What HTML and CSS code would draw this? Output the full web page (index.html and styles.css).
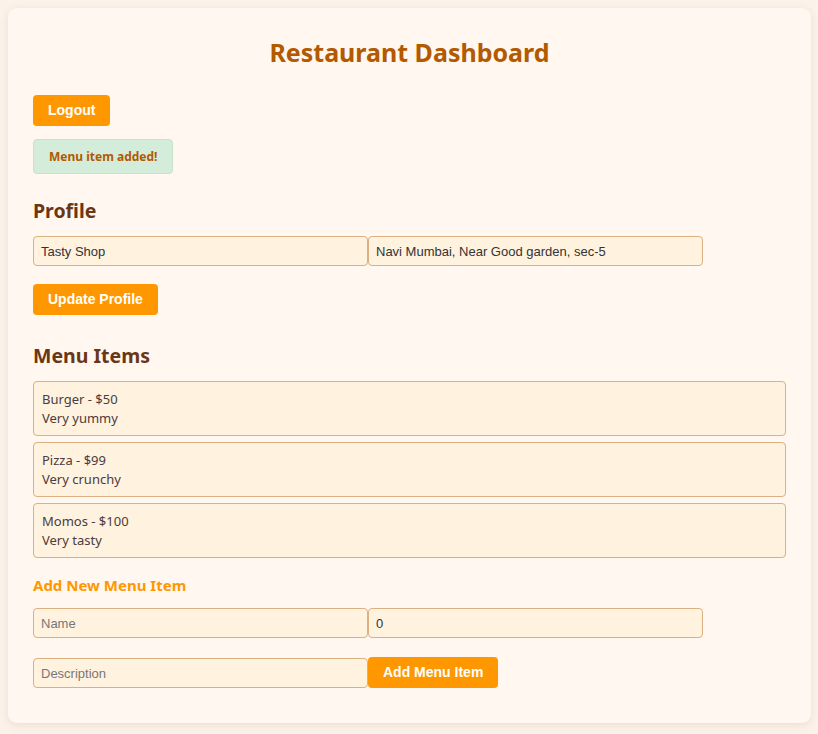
FILE: index.html
```html
<!DOCTYPE html>
<html lang="en">
<head>
<meta charset="utf-8">
<title>Restaurant Dashboard</title>
<link rel="stylesheet" href="styles.css">
</head>
<body>
<div class="card">
  <h1 class="title">Restaurant Dashboard</h1>
  <button class="btn logout">Logout</button>
  <div class="alert">Menu item added!</div>

  <h3 class="section">Profile</h3>
  <div class="row profile-row">
    <input class="field" type="text" value="Tasty Shop">
    <input class="field" type="text" value="Navi Mumbai, Near Good garden, sec-5">
  </div>
  <button class="btn update">Update Profile</button>

  <h3 class="section menu-heading">Menu Items</h3>
  <div class="menu-list">
    <div class="menu-item">Burger - $50<br>Very yummy</div>
    <div class="menu-item">Pizza - $99<br>Very crunchy</div>
    <div class="menu-item">Momos - $100<br>Very tasty</div>
  </div>

  <h4 class="add-heading">Add New Menu Item</h4>
  <div class="row add-row1">
    <input class="field" type="text" placeholder="Name">
    <input class="field" type="number" value="0">
  </div>
  <div class="row add-row2">
    <input class="field" type="text" placeholder="Description">
    <button class="btn add">Add Menu Item</button>
  </div>
</div>
</body>
</html>
```

FILE: styles.css
```css
html, body {
  margin: 0;
  padding: 0;
}
body {
  background: #fbf2ea;
  padding: 8px 7px 12px 8px;
  font-family: "Noto Sans", "Open Sans", sans-serif;
}
.card {
  background: #fff7f0;
  border-radius: 9px;
  box-shadow: 0 2px 8px rgba(120, 70, 20, 0.10);
  padding: 27px 25px 35px;
}
.title {
  margin: 0 0 26px;
  text-align: center;
  font-size: 25px;
  line-height: 34px;
  font-weight: 700;
  color: #b35900;
}
.btn {
  display: block;
  background: #ff9800;
  color: #fff;
  border: none;
  border-radius: 4px;
  font-family: "Liberation Sans", Arial, sans-serif;
  font-weight: 700;
  font-size: 14px;
  line-height: 17px;
  padding: 7px 15px;
  margin: 0;
  cursor: pointer;
}
.alert {
  display: inline-block;
  margin-top: 13px;
  background: #d4edda;
  border: 1px solid #c3e6cb;
  border-radius: 4px;
  color: #b35900;
  font-weight: 700;
  font-size: 12px;
  line-height: 15px;
  padding: 9px 15px;
}
.section {
  margin: 23px 0 0;
  font-size: 19.5px;
  line-height: 27px;
  font-weight: 700;
  color: #6b3614;
}
.menu-heading {
  margin-top: 27px;
}
.row {
  display: flex;
}
.profile-row {
  margin-top: 12px;
}
.field {
  box-sizing: border-box;
  width: 335px;
  height: 30px;
  margin: 0;
  padding: 6px 7px;
  background: #fff2df;
  border: 1px solid #dcb080;
  border-radius: 4px;
  font-family: "Liberation Sans", Arial, sans-serif;
  font-size: 13px;
  color: #333;
  outline: none;
}
.field::placeholder {
  color: #777;
}
.field::-webkit-inner-spin-button,
.field::-webkit-outer-spin-button {
  -webkit-appearance: none;
  margin: 0;
}
.update {
  margin-top: 18px;
}
.menu-list {
  margin-top: 12px;
  display: flex;
  flex-direction: column;
  gap: 6px;
}
.menu-item {
  background: #fff2df;
  border: 1px solid #dcb080;
  border-radius: 4px;
  padding: 8px 8px;
  font-size: 13px;
  line-height: 18.5px;
  color: #4a3c40;
}
.add-heading {
  margin: 16px 0 0;
  font-size: 15px;
  line-height: 22px;
  font-weight: 700;
  color: #ff9800;
}
.add-row1 {
  margin-top: 12px;
}
.add-row2 {
  margin-top: 19px;
  align-items: flex-end;
}
```
